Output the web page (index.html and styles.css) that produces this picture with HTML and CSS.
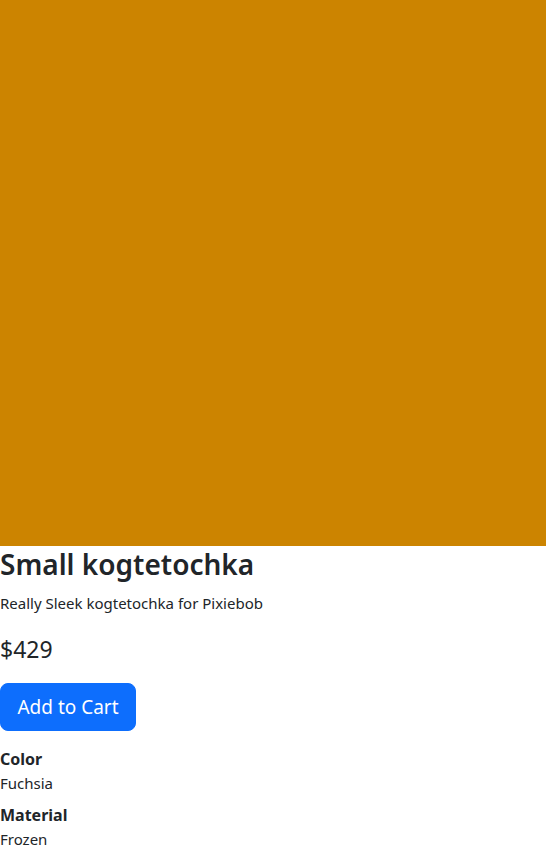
FILE: index.html
```html
<!DOCTYPE html>
<html lang="en">
<head>
<meta charset="utf-8">
<title>Small kogtetochka</title>
<link rel="stylesheet" href="styles.css">
</head>
<body>
<div class="product">
  <div class="product-image"></div>
  <h1 class="title">Small kogtetochka</h1>
  <p class="desc">Really Sleek kogtetochka for Pixiebob</p>
  <p class="price">$429</p>
  <button class="btn-cart" type="button">Add to Cart</button>
  <dl class="specs">
    <dt>Color</dt>
    <dd>Fuchsia</dd>
    <dt>Material</dt>
    <dd>Frozen</dd>
  </dl>
</div>
</body>
</html>
```
FILE: styles.css
```css
html, body {
  margin: 0;
  padding: 0;
}
body {
  font-family: "Noto Sans", "Open Sans", sans-serif;
  font-size: 16px;
  line-height: 1.5;
  color: #212529;
  background: #fff;
}
.product-image {
  width: 546px;
  height: 546px;
  background: #cc8400;
}
.title {
  margin: 0 0 8px;
  font-size: 28px;
  font-weight: 600;
  line-height: 37px;
}
.desc {
  margin: 0 0 16px;
  font-size: 15px;
  line-height: 24px;
}
.price {
  margin: 0 0 15px;
  font-size: 23px;
  line-height: 37px;
}
.btn-cart {
  display: block;
  height: 48px;
  padding: 0 16px;
  font-family: inherit;
  font-size: 19px;
  line-height: 1.5;
  color: #fff;
  background: #0d6efd;
  border: 1px solid #0d6efd;
  border-radius: 8px;
  margin: 0 0 16px;
  width: 136px;
}
.specs {
  margin: 0;
}
.specs dt {
  font-weight: 700;
  line-height: 24px;
}
.specs dd {
  margin: 0 0 8px;
  line-height: 24px;
  font-size: 15px;
}
```
